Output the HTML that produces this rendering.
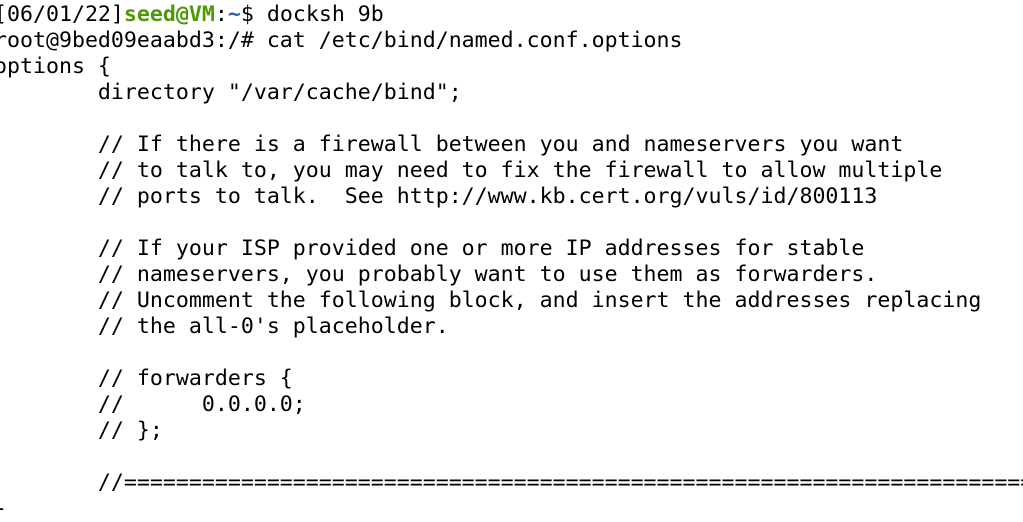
<!DOCTYPE html><html><head><style>
html,body{margin:0;background:#fff;width:1023px;height:509px;overflow:hidden}
pre{position:absolute;left:-6px;top:2px;margin:0;font-family:"DejaVu Sans Mono",monospace;font-size:21.58px;line-height:26px;color:#000;white-space:pre}
.g{color:#4e9a06;font-weight:bold}.b{color:#3465a4;font-weight:bold}
</style></head><body><pre>[06/01/22]<span class="g">seed@VM</span>:<span class="b">~</span>$ docksh 9b
root@9bed09eaabd3:/# cat /etc/bind/named.conf.options
options {
        directory "/var/cache/bind";

        // If there is a firewall between you and nameservers you want
        // to talk to, you may need to fix the firewall to allow multiple
        // ports to talk.  See http://www.kb.cert.org/vuls/id/800113

        // If your ISP provided one or more IP addresses for stable
        // nameservers, you probably want to use them as forwarders.
        // Uncomment the following block, and insert the addresses replacing
        // the all-0's placeholder.

        // forwarders {
        //      0.0.0.0;
        // };

        //========================================================================
-
</pre></body></html>
